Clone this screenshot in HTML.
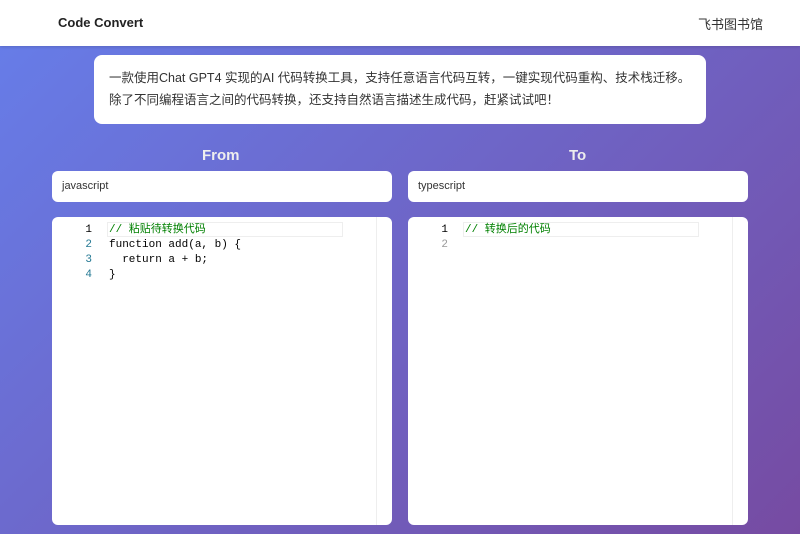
<!DOCTYPE html>
<html><head><meta charset="utf-8"><style>
*{margin:0;padding:0;box-sizing:border-box}
body{width:800px;height:534px;overflow:hidden;font-family:"Liberation Sans","Noto Sans CJK SC",sans-serif;background:linear-gradient(135deg,#667eea 0%,#764ba2 100%)}
.hdr{height:46px;background:#fff;position:relative;box-shadow:0 1px 3px rgba(0,0,0,.15)}
.hdr .l{position:absolute;left:58px;top:15px;font-weight:bold;font-size:13px;color:#222}
.hdr .r{position:absolute;right:37px;top:14px;font-size:13px;color:#333}
.intro{position:absolute;left:94px;top:55px;width:612px;height:69px;background:#fff;border-radius:8px;padding:12px 15px;font-size:12.5px;line-height:22px;color:#333}
.t{position:absolute;top:147px;color:#eee;font-weight:bold;font-size:15px}
.inp{position:absolute;top:171px;width:340px;height:31px;background:#fff;border-radius:6px;padding:9px 10px;font-size:11px;line-height:15px;padding-top:8px;color:#333}
.ed{position:absolute;top:217px;width:340px;height:308px;background:#fff;border-radius:6px;overflow:hidden;font-family:"Liberation Mono","Noto Sans CJK SC",monospace;font-size:11px;line-height:15px}
.ln{position:absolute;left:0;width:40px;height:15px;text-align:right;color:#237893}
.cd{position:absolute;left:57px;height:15px;white-space:pre;color:#000}
.sb{position:absolute;right:15px;top:0;width:1px;height:100%;background:#eee}
.cl{position:absolute;left:55px;top:5px;width:236px;height:15px;border:1px solid #eee}
</style></head><body>
<div class="hdr"><div class="l">Code Convert</div><div class="r">飞书图书馆</div></div>
<div class="intro">一款使用Chat GPT4 实现的AI 代码转换工具，支持任意语言代码互转，一键实现代码重构、技术栈迁移。<br>除了不同编程语言之间的代码转换，还支持自然语言描述生成代码，赶紧试试吧！</div>
<div class="t" style="left:202px">From</div>
<div class="t" style="left:569px">To</div>
<div class="inp" style="left:52px">javascript</div>
<div class="inp" style="left:408px">typescript</div>
<div class="ed" style="left:52px"><div class="cl"></div><div class="sb"></div>
<div class="ln" style="top:6px;color:#000">1</div><div class="ln" style="top:21px">2</div><div class="ln" style="top:36px">3</div><div class="ln" style="top:51px">4</div>
<div class="cd" style="top:6px;color:#008000">// 粘贴待转换代码</div>
<div class="cd" style="top:21px">function add(a, b) {</div>
<div class="cd" style="top:36px">  return a + b;</div>
<div class="cd" style="top:51px">}</div>
</div>
<div class="ed" style="left:408px"><div class="cl"></div><div class="sb"></div>
<div class="ln" style="top:6px;color:#000">1</div><div class="ln" style="top:21px;color:#999">2</div>
<div class="cd" style="top:6px;color:#008000">// 转换后的代码</div>
</div>
</body></html>
